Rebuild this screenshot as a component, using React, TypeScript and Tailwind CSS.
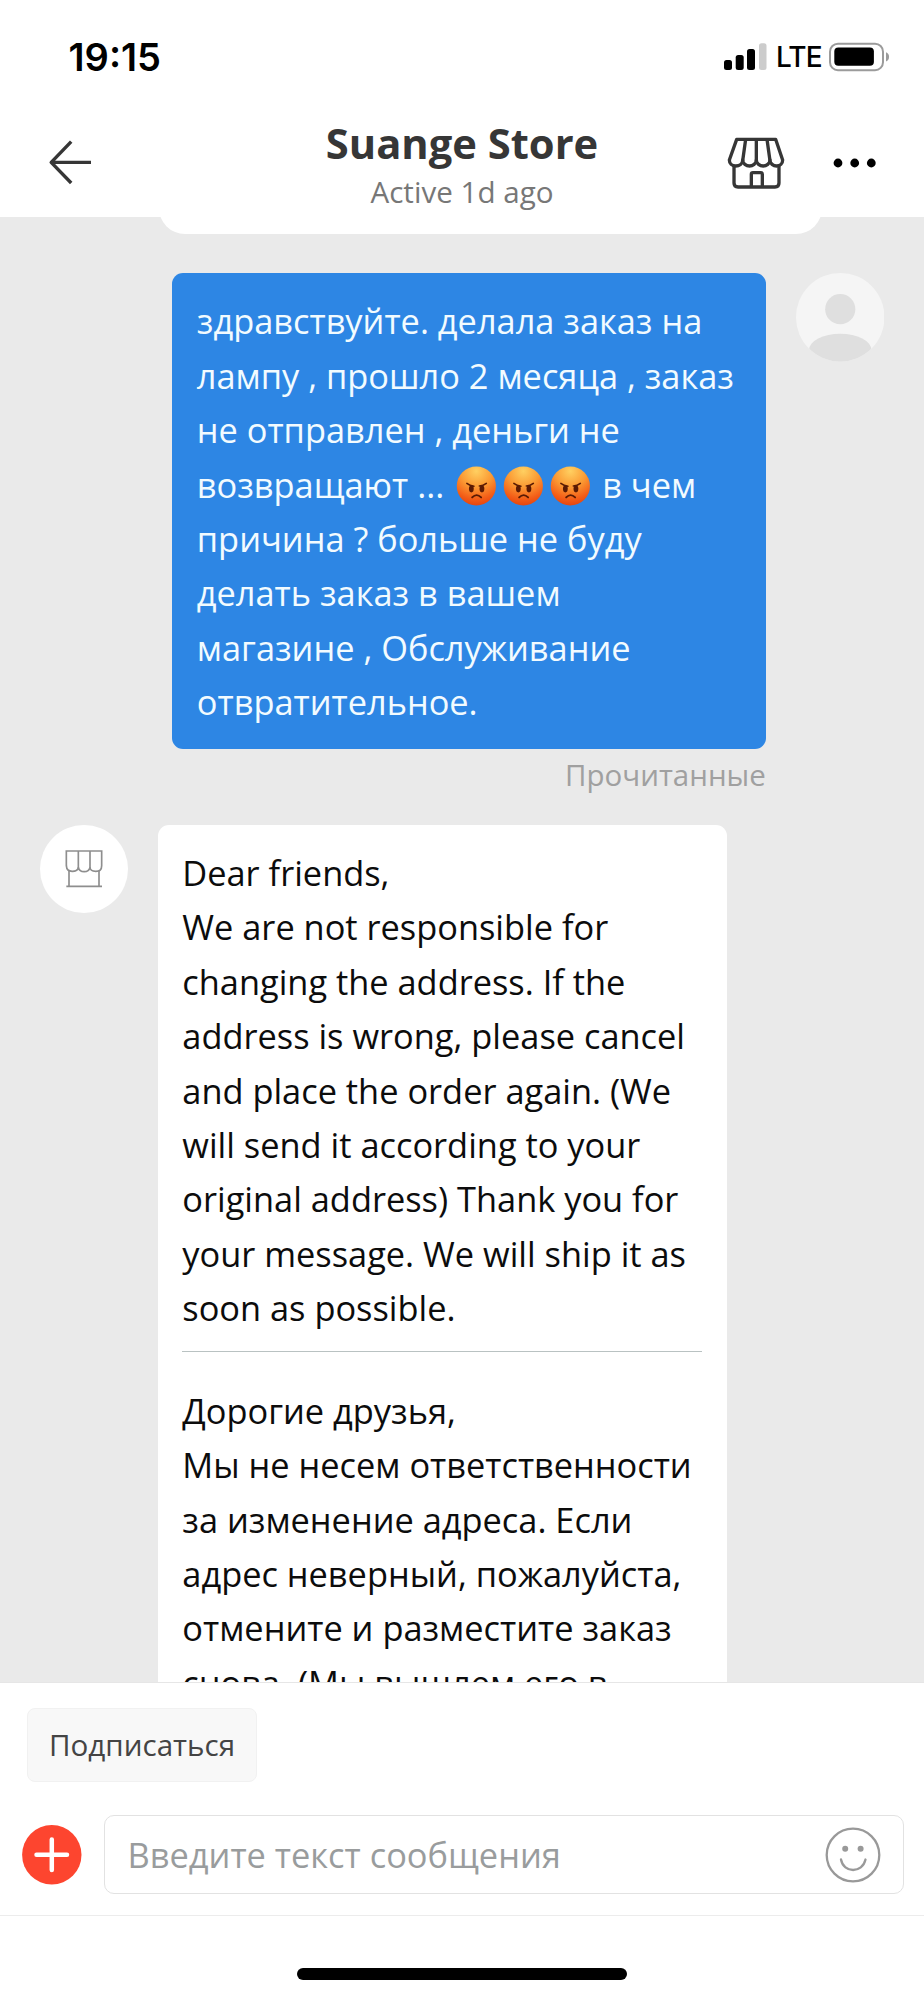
import type { ReactNode } from 'react'

const StatusBar = () => (
  <div className="flex h-[113px] items-start justify-between pt-[33px] pr-[33px] pl-[68.5px]">
    <span className="font-[Inter] text-[38px] leading-[48px] font-semibold text-black">
      19:15
    </span>
    <div className="flex items-center pt-[9px]">
      <svg width="44" height="30" viewBox="0 0 44 30">
        <rect x="0" y="18" width="8" height="10" rx="2.5" />
        <rect x="11.7" y="13" width="8" height="15" rx="2.5" />
        <rect x="23" y="7" width="8" height="21" rx="2.5" />
        <rect x="35" y="1.3" width="7.5" height="26.7" rx="2.5" fill="#cccccc" />
      </svg>
      <span className="ml-[8px] w-[53px] font-[Inter] text-[28px] leading-[30px] font-medium tracking-[-0.9px] text-black">
        LTE
      </span>
      <svg width="62" height="30" viewBox="0 0 62 30">
        <rect
          x="1"
          y="1.7"
          width="53"
          height="26.5"
          rx="8"
          fill="none"
          stroke="#9b9b9b"
          strokeWidth="2"
        />
        <rect x="5.3" y="5.6" width="39.6" height="18.2" rx="4" />
        <path d="M57 10.3a5 5 0 0 1 0 9.2Z" fill="#9b9b9b" />
      </svg>
    </div>
  </div>
)

const ChatHeader = () => (
  <header className="grid h-[104px] grid-cols-[260px_1fr_260px]">
    <svg
      className="mt-[26px] ml-[46.5px]"
      width="48"
      height="48"
      viewBox="0 0 48 48"
      fill="none"
      stroke="#363636"
      strokeWidth="3.4"
      strokeLinejoin="round"
    >
      <path d="M24.2 2.6 4.2 23.4l20 20.6M4.2 23.4H44" />
    </svg>
    <div className="flex flex-col items-center whitespace-nowrap">
      <h1 className="-mt-px text-[41.7px] leading-[62px] font-bold text-[#363636]">
        Suange Store
      </h1>
      <p className="-mt-[4px] text-[29.6px] leading-[44px] text-[#777777]">
        Active 1d ago
      </p>
    </div>
    <div className="flex items-start">
      <svg
        className="mt-[23px] ml-[61px]"
        width="60"
        height="53.3"
        viewBox="790 408 180 160"
        fill="none"
        stroke="#363636"
        strokeWidth="10"
        strokeLinejoin="round"
      >
        <path d="M825 418H942L963 480C963 491 955 498 945 498S925 491 925 480C925 491 914 498 904.5 498S884 491 884 480C884 491 873 498 863.5 498S843 491 843 480C843 491 833 498 822 498S803 491 803 480Z" />
        <path d="M852 418 843 482M884 418V482M916 418 925 482" />
        <path d="M817 498V549Q817 561 829 561H940Q952 561 952 549V498M869 561V523Q869 518 874 518H897Q902 518 902 523V561" />
      </svg>
      <svg className="mt-[45px] ml-[48px]" width="44" height="10" viewBox="0 0 44 10">
        <circle cx="5" cy="5" r="4.4" />
        <circle cx="21.7" cy="5" r="4.4" />
        <circle cx="38.3" cy="5" r="4.4" />
      </svg>
    </div>
  </header>
)

const AngryFace = () => (
  <svg
    className="inline-block align-[-8px]"
    width="46.7"
    height="40"
    viewBox="-23.35 -20 46.7 40"
  >
    <defs>
      <radialGradient id="angry-face" cx="0.5" cy="0.12" r="0.9">
        <stop offset="0" stopColor="#ffd061" />
        <stop offset="0.45" stopColor="#fb9a33" />
        <stop offset="0.8" stopColor="#f35c17" />
        <stop offset="1" stopColor="#e2430f" />
      </radialGradient>
    </defs>
    <circle r="19.6" fill="url(#angry-face)" />
    <g fill="#5a1a04">
      <ellipse cx="-5" cy="2.8" rx="2.4" ry="3.6" />
      <ellipse cx="5.6" cy="2.8" rx="2.4" ry="3.6" />
    </g>
    <g fill="none" stroke="#5a1a04" strokeWidth="1.6" strokeLinecap="round">
      <path d="M-9.5-2.6Q-6.5-.2-2.4.2M10-2.6Q7-.2 3 0" />
      <path d="M-4.2 11.4Q.3 6.8 4.8 11.4" strokeWidth="1.9" />
    </g>
  </svg>
)

const UserAvatar = () => (
  <svg width="88.5" height="88.5" viewBox="0 0 88 88">
    <clipPath id="user-avatar">
      <circle cx="44" cy="44" r="44" />
    </clipPath>
    <g clipPath="url(#user-avatar)">
      <rect width="88" height="88" fill="#f5f5f5" />
      <circle cx="44" cy="36" r="15" fill="#dfdfdf" />
      <ellipse cx="44" cy="76.5" rx="31" ry="16.2" fill="#dfdfdf" />
    </g>
  </svg>
)

const StoreAvatar = () => (
  <div className="flex size-[88.5px] shrink-0 items-center justify-center rounded-full bg-white">
    <svg
      width="40"
      height="40"
      viewBox="191 149 120 120"
      fill="none"
      stroke="#8e8e8e"
      strokeWidth="5"
    >
      <path d="M198 155H304V199Q304 216 286.5 216T269 204Q266 217 251.5 217T234 204Q232 216 215.5 216T198 199Z" />
      <path d="M234 155V206M269 155V206M206 214V261M296 214V261M198 261H305" />
    </svg>
  </div>
)

const Lines = ({ lines }: { lines: ReactNode[] }) => (
  <div className="text-[34.36px] leading-[54.4px] whitespace-nowrap">
    {lines.map((line, index) => (
      <p key={index} className="h-[54.4px]">
        {line}
      </p>
    ))}
  </div>
)

const complaint: ReactNode[] = [
  'здравствуйте. делала заказ на',
  'лампу , прошло 2 месяца , заказ',
  'не отправлен , деньги не',
  <>
    возвращают ... <AngryFace />
    <AngryFace />
    <AngryFace /> в чем
  </>,
  'причина ? больше не буду',
  'делать заказ в вашем',
  'магазине , Обслуживание',
  'отвратительное.',
]

const reply = [
  'Dear friends,',
  'We are not responsible for',
  'changing the address. If the',
  'address is wrong, please cancel',
  'and place the order again. (We',
  'will send it according to your',
  'original address) Thank you for',
  'your message. We will ship it as',
  'soon as possible.',
]

const replyTranslated = [
  'Дорогие друзья,',
  'Мы не несем ответственности',
  'за изменение адреса. Если',
  'адрес неверный, пожалуйста,',
  'отмените и разместите заказ',
  'снова. (Мы вышлем его в',
]

const Messages = () => (
  <main className="h-[1465px] overflow-hidden bg-[#eaeaea]">
    <div className="ml-[159px] h-[17px] overflow-hidden">
      <div className="-mt-[35px] h-[52px] w-[663px] rounded-b-[26px] bg-white" />
    </div>

    <div className="mt-[39.3px] flex items-start justify-end pr-[39.7px]">
      <div className="flex flex-col items-end">
        <div className="h-[475.6px] w-[594px] rounded-[11px] bg-[#2d86e4] px-[25px] pt-[21.2px] text-[#f2fbff]">
          <Lines lines={complaint} />
        </div>
        <p className="mt-[6.4px] text-[29.5px] leading-[40px] text-[#a0a0a0]">
          Прочитанные
        </p>
      </div>
      <div className="ml-[30px]">
        <UserAvatar />
      </div>
    </div>

    <div className="mt-[29.7px] flex items-start pl-[39.5px]">
      <StoreAvatar />
      <div className="ml-[29.5px] w-[569.3px] rounded-t-[11px] bg-white px-[24.8px] pt-[21px] text-[#0c0c0c]">
        <Lines lines={reply} />
        <div className="mt-[16px] mb-[31.4px] h-px bg-[#b9c2c2]" />
        <Lines lines={replyTranslated} />
      </div>
    </div>
  </main>
)

const Composer = () => (
  <footer className="h-[318px] border-t border-[#e6e6e6] bg-white">
    <div className="pt-[25px] pl-[27px]">
      <button
        type="button"
        className="block h-[74px] w-[230px] rounded-[8px] border border-[#f1f1f1] bg-[#f8f8f8] text-[29.6px] text-[#444444]"
      >
        Подписаться
      </button>
    </div>
    <div className="mt-[33px] flex h-[79px] items-center pr-[20px] pl-[22px]">
      <svg width="60" height="60" viewBox="0 0 60 60">
        <circle cx="29.8" cy="29.8" r="29.7" fill="#fd452f" />
        <path
          d="M14.5 29.8H45M29.8 14.5V45"
          stroke="white"
          strokeWidth="4.5"
          strokeLinecap="round"
        />
      </svg>
      <div className="ml-[22px] flex h-[79px] flex-1 items-center justify-between rounded-[10px] border-[1.5px] border-[#e2e2e2] pr-[22px] pl-[22.5px]">
        <span className="text-[34.4px] leading-[54px] whitespace-nowrap text-[#999c9d]">
          Введите текст сообщения
        </span>
        <svg
          width="56"
          height="56"
          viewBox="0 0 56 56"
          fill="none"
          stroke="#999999"
          strokeWidth="2.3"
        >
          <circle cx="28" cy="28" r="26.3" />
          <path d="M16 32.5C18.5 46.5 37.5 46.5 40.5 32.5" strokeLinecap="round" />
          <circle cx="20.2" cy="21.7" r="3" fill="#999999" stroke="none" />
          <circle cx="35.6" cy="21.7" r="3" fill="#999999" stroke="none" />
        </svg>
      </div>
    </div>
    <div className="mt-[21px] h-px bg-[#ececec]" />
    <div className="mx-auto mt-[52px] h-[12px] w-[330px] rounded-full bg-black" />
  </footer>
)

export default function App() {
  return (
    <div className="h-[2000px] w-[924px] overflow-hidden bg-white font-['Open_Sans','Noto_Sans',sans-serif]">
      <StatusBar />
      <ChatHeader />
      <Messages />
      <Composer />
    </div>
  )
}
